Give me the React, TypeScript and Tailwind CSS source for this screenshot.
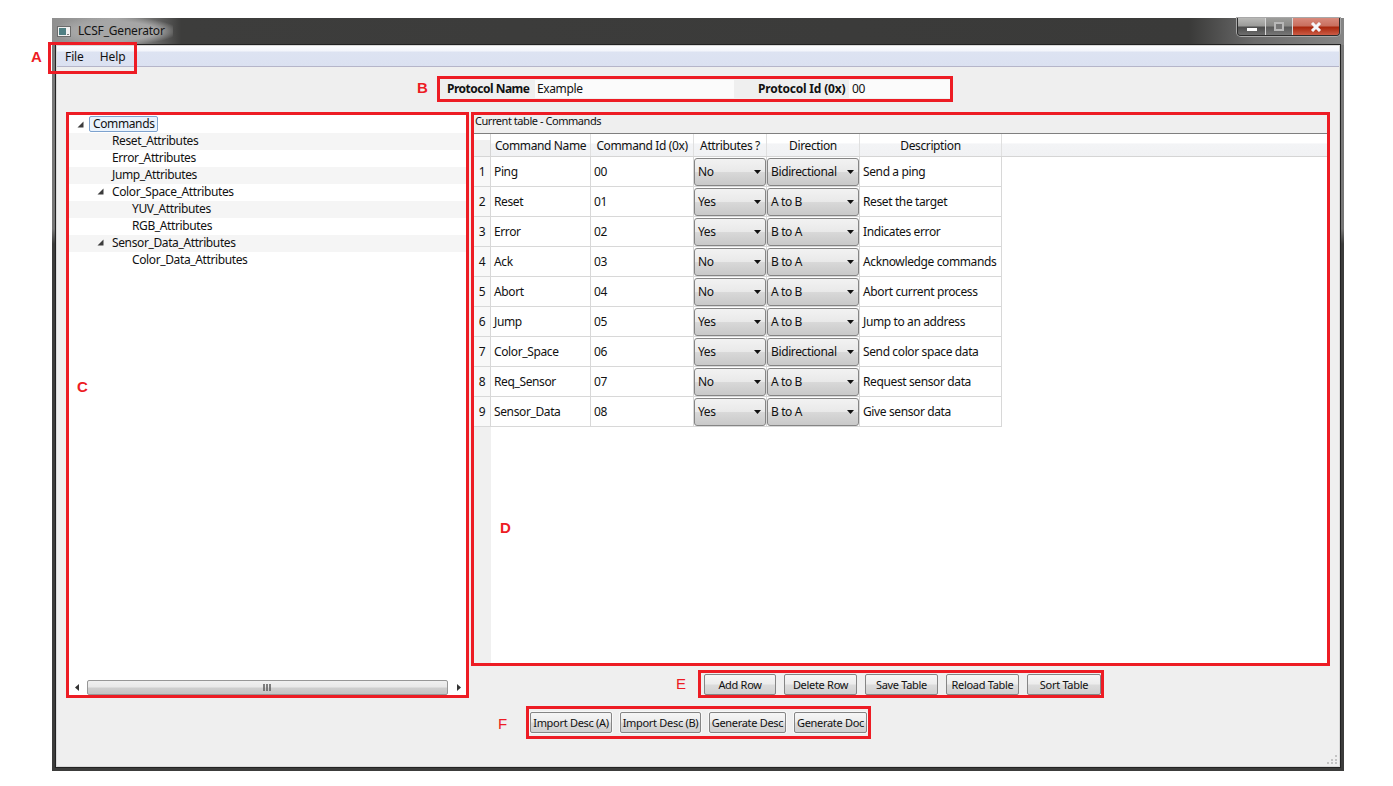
const treeRows = [
  { label: "Reset_Attributes", indent: "pl-[43px]", shaded: true },
  { label: "Error_Attributes", indent: "pl-[43px]", shaded: false },
  { label: "Jump_Attributes", indent: "pl-[43px]", shaded: true },
  { label: "Color_Space_Attributes", indent: "pl-[43px]", shaded: false, arrow: true },
  { label: "YUV_Attributes", indent: "pl-[63px]", shaded: true },
  { label: "RGB_Attributes", indent: "pl-[63px]", shaded: false },
  { label: "Sensor_Data_Attributes", indent: "pl-[43px]", shaded: true, arrow: true },
  { label: "Color_Data_Attributes", indent: "pl-[63px]", shaded: false },
];

const commands = [
  ["Ping", "00", "No", "Bidirectional", "Send a ping"],
  ["Reset", "01", "Yes", "A to B", "Reset the target"],
  ["Error", "02", "Yes", "B to A", "Indicates error"],
  ["Ack", "03", "No", "B to A", "Acknowledge commands"],
  ["Abort", "04", "No", "A to B", "Abort current process"],
  ["Jump", "05", "Yes", "A to B", "Jump to an address"],
  ["Color_Space", "06", "Yes", "Bidirectional", "Send color space data"],
  ["Req_Sensor", "07", "No", "A to B", "Request sensor data"],
  ["Sensor_Data", "08", "Yes", "B to A", "Give sensor data"],
];

function Expander() {
  return (
    <svg width="7" height="7" viewBox="0 0 7 7" className="shrink-0">
      <path d="M0.5 6.5 L6.5 6.5 L6.5 0.5 Z" fill="#3c3c3c" />
    </svg>
  );
}

function Combo({ value, width }: { value: string; width: string }) {
  return (
    <div
      className={`flex h-[28px] ${width} items-center justify-between rounded-[3px] border border-[#858585] bg-[linear-gradient(#f2f2f2,#e9e9e9_48%,#d8d8d8_52%,#c9c9c9)] pl-[3px] pr-[4px]`}
    >
      <span>{value}</span>
      <svg width="7" height="4" viewBox="0 0 7 4">
        <path d="M0 0 H7 L3.5 4 Z" fill="#111" />
      </svg>
    </div>
  );
}

function PushButton({ label, width, halo }: { label: string; width: string; halo?: boolean }) {
  return (
    <button
      className={`flex h-[21px] ${width} items-center justify-center whitespace-nowrap rounded-[2px] border border-[#858585] bg-[linear-gradient(#f6f6f6,#ececec_48%,#dcdcdc_52%,#d0d0d0)] text-[11px] tracking-[-0.3px] ${halo ? "ring-1 ring-[#f8f8f8]" : ""}`}
    >
      {label}
    </button>
  );
}

function Tag({ text, className }: { text: string; className: string }) {
  return (
    <span className={`absolute font-['Liberation_Sans',sans-serif] text-[15px] tracking-normal text-[#ed1c24] ${className}`}>
      {text}
    </span>
  );
}

export default function App() {
  return (
    <div className="relative h-[786px] w-[1393px] overflow-hidden bg-white pl-[52px] pt-[18px] font-['Noto_Sans',sans-serif] text-[12px] leading-none tracking-[-0.38px] text-[#111]">
      <div className="flex h-[753px] w-[1292px] flex-col bg-[linear-gradient(#7a7a7a,#767676_28%,#3c3c3b_30%)] px-[4px] pb-[4px]">
        {/* title bar */}
        <div className="-mx-[4px] flex h-[27px] shrink-0 items-start justify-between bg-[linear-gradient(90deg,#8f8f8f,#a6a6a6_5%,#3d3d3c_10%,#3a3a39_88%,#6a6a6a_93%,#858585)] pl-[5px] pr-[4px]">
          <div className="flex h-[26px] items-center gap-[7px] bg-[radial-gradient(ellipse_at_center,#a6a6a6_50%,#a6a6a600_78%)] pr-[8px]">
            <svg width="14" height="11" viewBox="0 0 14 11">
              <rect x="0.5" y="0.5" width="13" height="10" fill="#f1f1f1" stroke="#6b6b6b" />
              <rect x="2" y="2" width="7" height="7" fill="#4f7f83" />
              <rect x="10" y="8" width="2" height="1" fill="#777" />
            </svg>
            <span className="tracking-[-0.2px] text-[#141414]">LCSF_Generator</span>
          </div>
          <div className="flex h-[18px] w-[103px] overflow-hidden rounded-b-[4px] border border-t-0 border-[#2c2c2c] shadow-[0_0_0_1px_#a8a8a8]">
            <div className="flex w-[28px] items-center justify-center border-r border-[#d8d8d8] bg-[linear-gradient(#b9b9b7,#9c9c9a_45%,#4d4d4d_55%,#6e6e6e)]">
              <div className="mt-[5px] h-[3px] w-[10px] bg-white" />
            </div>
            <div className="flex w-[27px] items-center justify-center border-r border-[#d8d8d8] bg-[linear-gradient(#9d9d9b,#8a8a88_45%,#5b5b5b_55%,#777)]">
              <div className="h-[9px] w-[10px] border-[2px] border-[#b8b8b8] bg-[#777]" />
            </div>
            <div className="flex flex-1 items-center justify-center bg-[linear-gradient(#d88a7c,#c9705f_45%,#a9280e_55%,#cc5b45)]">
              <svg width="12" height="10" viewBox="0 0 12 10">
                <path d="M2 1 L10 9 M10 1 L2 9" stroke="#f4f6fa" strokeWidth="3" />
              </svg>
            </div>
          </div>
        </div>

        {/* client area */}
        <div className="flex min-h-0 flex-1 flex-col border border-[#d9d9d9] bg-[#efefef] outline outline-1 outline-[#222]">
          <div className="flex h-[21px] shrink-0 items-center gap-[16px] border-b border-[#b5b5c9] bg-[linear-gradient(#fbfcfe,#f3f5fb_25%,#dde3f2_30%,#dbe1f1)] pl-[8px] pt-[1px] tracking-[-0.1px]">
            <span>File</span>
            <span>Help</span>
          </div>

          <div className="ml-[380px] mt-[9px] flex h-[26px] w-[516px] items-center border-[3px] border-[#ed1c24] pl-[7px]">
            <span className="w-[88px] whitespace-nowrap font-bold tracking-[-0.5px]">Protocol Name</span>
            <span className="flex h-[18px] w-[199px] items-center bg-[#fbfbfb] pl-[2px]">Example</span>
            <span className="ml-[24px] w-[91px] whitespace-nowrap font-bold tracking-[-0.2px]">Protocol Id (0x)</span>
            <span className="flex h-[18px] flex-1 items-center bg-[#fbfbfb] pl-[3px]">00</span>
          </div>

          <div className="ml-[9px] mt-[10px] flex items-start gap-[2px]">
            {/* tree */}
            <div className="flex h-[586px] w-[403px] flex-col border-[3px] border-[#ed1c24] bg-white">
              <div className="min-h-0 flex-1">
                <div className="flex h-[18px] items-center pl-[8px]">
                  <Expander />
                  <span className="ml-[5px] flex h-[16px] w-[69px] items-center rounded-[2px] border border-[#7da2ce] bg-[#eaf3fd] pl-[3px]">
                    Commands
                  </span>
                </div>
                {treeRows.map((row) => (
                  <div
                    key={row.label}
                    className={`relative flex h-[17px] items-center pb-[1px] ${row.indent} ${row.shaded ? "bg-[#f5f5f5]" : "bg-white"}`}
                  >
                    {row.arrow && (
                      <span className="absolute left-[28px] top-[4px]">
                        <Expander />
                      </span>
                    )}
                    {row.label}
                  </div>
                ))}
              </div>
              <div className="flex h-[16px] shrink-0 items-center pl-[6px] pr-[5px]">
                <svg width="4" height="7" viewBox="0 0 4 7">
                  <path d="M4 0 V7 L0 3.5 Z" fill="#333" />
                </svg>
                <div className="ml-[8px] flex h-[15px] w-[361px] items-center justify-center rounded-[2px] border border-[#979797] bg-[linear-gradient(#f0f0f0,#e8e8e8_48%,#cfcfcf_52%,#c4c4c4)]">
                  <svg width="9" height="7" viewBox="0 0 9 7">
                    <path d="M1 0 V7 M4 0 V7 M7 0 V7" stroke="#5a5a5a" strokeWidth="1.5" />
                  </svg>
                </div>
                <svg width="4" height="7" viewBox="0 0 4 7" className="ml-auto">
                  <path d="M0 0 V7 L4 3.5 Z" fill="#333" />
                </svg>
              </div>
            </div>

            <div className="flex flex-col">
              {/* table */}
              <div className="flex h-[554px] w-[859px] flex-col border-[3px] border-[#ed1c24]">
                <div className="flex h-[18px] shrink-0 items-start pl-[1px] text-[11px] tracking-[-0.45px]">Current table - Commands</div>
                <div className="flex min-h-0 flex-1 flex-col border-t border-[#7f7f7f] bg-white">
                  <div className="flex h-[23px] shrink-0 border-b border-[#d5d5d5] bg-[linear-gradient(#fff,#fff_42%,#f3f4f6_44%,#f1f2f4)]">
                    <div className="w-[17px] border-r border-[#d5d5d5] bg-[linear-gradient(#fff,#fff_25%,#f0f0f0_27%)]" />
                    <div className="flex w-[100px] items-center justify-center border-r border-[#e0e0e0] pt-[2px]">Command Name</div>
                    <div className="flex w-[103px] items-center justify-center border-r border-[#e0e0e0] pt-[2px]">Command Id (0x)</div>
                    <div className="flex w-[73px] items-center justify-center border-r border-[#e0e0e0] pt-[2px]">Attributes ?</div>
                    <div className="flex w-[93px] items-center justify-center border-r border-[#e0e0e0] pt-[2px]">Direction</div>
                    <div className="flex w-[142px] items-center justify-center border-r border-[#e0e0e0] pt-[2px]">Description</div>
                  </div>
                  <div className="flex min-h-0 flex-1">
                    <div className="flex w-[17px] shrink-0 flex-col bg-[#f0f0f0]">
                      {commands.map((row, i) => (
                        <div key={row[0]} className="flex h-[30px] items-center justify-center border-b border-r border-[#d8d8d8] bg-[#f8f8f8] pt-px">
                          {i + 1}
                        </div>
                      ))}
                    </div>
                    <div className="flex flex-col">
                      {commands.map((row) => (
                        <div key={row[0]} className="flex h-[30px] border-b border-[#d8d8d8]">
                          <div className="flex w-[100px] items-center border-r border-[#d8d8d8] pl-[3px]">{row[0]}</div>
                          <div className="flex w-[103px] items-center border-r border-[#d8d8d8] pl-[3px]">{row[1]}</div>
                          <div className="flex w-[73px] items-center border-r border-[#d8d8d8]">
                            <Combo value={row[2]} width="w-[72px]" />
                          </div>
                          <div className="flex w-[93px] items-center border-r border-[#d8d8d8]">
                            <Combo value={row[3]} width="w-[92px]" />
                          </div>
                          <div className="flex w-[142px] items-center whitespace-nowrap border-r border-[#d8d8d8] pl-[3px]">{row[4]}</div>
                        </div>
                      ))}
                    </div>
                  </div>
                </div>
              </div>

              <div className="ml-[227px] mt-[4px] flex h-[28px] w-[406px] items-start gap-[8px] border-[3px] border-[#ed1c24] pl-[3px] pt-[1px]">
                <PushButton label="Add Row" width="w-[72px]" />
                <PushButton label="Delete Row" width="w-[73px]" />
                <PushButton label="Save Table" width="w-[73px]" />
                <PushButton label="Reload Table" width="w-[73px]" />
                <PushButton label="Sort Table" width="w-[74px]" />
              </div>
            </div>
          </div>

          <div className="ml-[469px] mt-[8px] flex h-[33px] w-[345px] items-start gap-[8px] border-[3px] border-[#ed1c24] pl-[1px] pt-[3px]">
            <PushButton label="Import Desc (A)" width="w-[82px]" halo />
            <PushButton label="Import Desc (B)" width="w-[81px]" halo />
            <PushButton label="Generate Desc" width="w-[77px]" halo />
            <PushButton label="Generate Doc" width="w-[73px]" halo />
          </div>

          <svg width="10" height="9" viewBox="0 0 10 9" className="ml-auto mr-[2px] mt-auto mb-[2px]">
            <path d="M8 0h2v2H8z M4 4h2v2H4z M8 4h2v2H8z M0 7h2v2H0z M4 7h2v2H4z M8 7h2v2H8z" fill="#c4c4c4" />
          </svg>
        </div>
      </div>

      {/* annotation overlay */}
      <div className="absolute left-[48px] top-[42px] h-[32px] w-[89px] border-[3px] border-[#ed1c24]" />
      <Tag text="A" className="left-[31px] top-[49px] font-bold" />
      <Tag text="B" className="left-[417px] top-[80px] font-bold" />
      <Tag text="C" className="left-[77px] top-[379px] font-bold" />
      <Tag text="D" className="left-[500px] top-[520px] font-bold" />
      <Tag text="E" className="left-[676px] top-[676px]" />
      <Tag text="F" className="left-[498px] top-[716px]" />
    </div>
  );
}
